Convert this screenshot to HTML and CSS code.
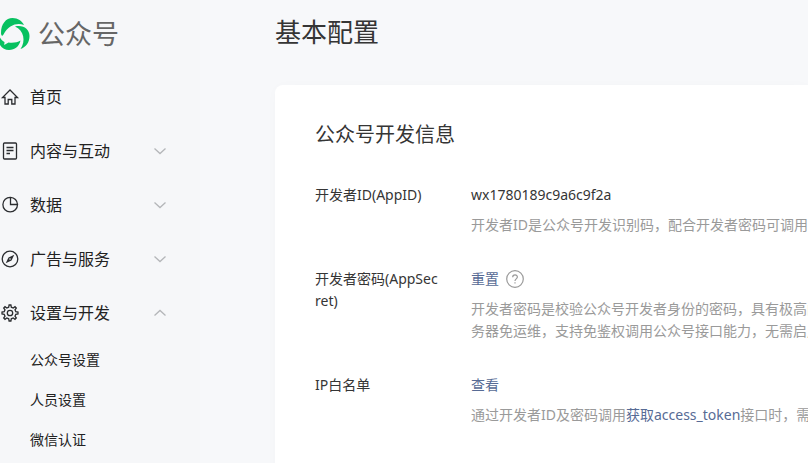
FILE: index.html
```html
<!DOCTYPE html>
<html lang="zh-CN">
<head>
<meta charset="utf-8">
<title>基本配置</title>
<link rel="stylesheet" href="styles.css">
</head>
<body>
<div class="layout">
  <aside class="sidebar">
    <a class="brand" href="#">
      <svg class="brand-logo" viewBox="0 0 30 34" aria-hidden="true">
        <path d="M1 16C1 7 6 1 12.500 1C18 1 22 4 24 8C17 5.500 8.500 8 3.500 17.500C2 20 1 18 1 16Z"/>
        <path d="M15 9.500C23 7.500 29.500 12 29.500 19C29.500 25.500 26 30 20.500 32C26 24.500 24 13 15 9.500Z"/>
        <path d="M-3 15L-.5 19.500C.5 22 2.500 24 4.500 25L4.200 28L8.500 25.500C13 26 17.500 25.500 20.500 23.500C19 29.500 15 33 9 33C2 33-3 27-3 15Z"/>
      </svg>
      <span class="brand-name">公众号</span>
    </a>
    <nav>
      <a class="menu-item" href="#">
        <svg class="menu-icon" viewBox="0 0 20 20" aria-hidden="true"><path d="M10 3L2.500 10.500H5V17H8.200V12.500H11.800V17H15V10.500H17.500Z"/></svg>
        <span>首页</span>
      </a>
      <button class="menu-item" type="button">
        <svg class="menu-icon" viewBox="0 0 20 20" aria-hidden="true"><rect x="3.500" y="2" width="13" height="16" rx="1"/><path d="M6.500 6.500H13.500M6.500 9.500H13.500M6.500 12.500H10"/></svg>
        <span>内容与互动</span>
        <svg class="chevron" viewBox="0 0 12 6" aria-hidden="true"><path d="M.5.500L6 5.500L11.500.5"/></svg>
      </button>
      <button class="menu-item" type="button">
        <svg class="menu-icon" viewBox="0 0 20 20" aria-hidden="true"><path d="M10.500 2.300A7.300 7.300 0 1 0 17.500 9.500H10.500V2"/><path d="M10.500 2.300A7.300 7.300 0 0 1 17.500 9.500"/></svg>
        <span>数据</span>
        <svg class="chevron" viewBox="0 0 12 6" aria-hidden="true"><path d="M.5.500L6 5.500L11.500.5"/></svg>
      </button>
      <button class="menu-item" type="button">
        <svg class="menu-icon" viewBox="0 0 20 20" aria-hidden="true"><circle cx="10" cy="10" r="7.800"/><path class="solid" d="M14.300 5.700L11.500 11.500L5.700 14.300L8.500 8.500Z"/><circle class="dot" cx="10" cy="10" r=".8"/></svg>
        <span>广告与服务</span>
        <svg class="chevron" viewBox="0 0 12 6" aria-hidden="true"><path d="M.5.500L6 5.500L11.500.5"/></svg>
      </button>
      <button class="menu-item" type="button" aria-expanded="true">
        <svg class="menu-icon" viewBox="0 0 20 20" aria-hidden="true"><path d="M8.700 4.200L9.100 2H10.900L11.300 4.200L13.200 5L15 3.700L16.300 5L15 6.800L15.800 8.700L18 9.100V10.900L15.800 11.300L15 13.200L16.300 15L15 16.300L13.200 15L11.300 15.800L10.900 18H9.100L8.700 15.800L6.800 15L5 16.300L3.700 15L5 13.200L4.200 11.300L2 10.900V9.100L4.200 8.700L5 6.800L3.700 5L5 3.700L6.800 5Z"/><circle cx="10" cy="10" r="2.700"/></svg>
        <span>设置与开发</span>
        <svg class="chevron" viewBox="0 0 12 6" aria-hidden="true"><path d="M.5 5.500L6 .5L11.500 5.500"/></svg>
      </button>
      <div class="submenu">
        <a href="#">公众号设置</a>
        <a href="#">人员设置</a>
        <a href="#">微信认证</a>
      </div>
    </nav>
  </aside>
  <main class="main">
    <h1>基本配置</h1>
    <section class="card">
      <h2>公众号开发信息</h2>
      <dl class="info">
        <dt>开发者ID(AppID)</dt>
        <dd>
          <div>wx1780189c9a6c9f2a</div>
          <p>开发者ID是公众号开发识别码，配合开发者密码可调用</p>
        </dd>
        <dt>开发者密码(AppSecret)</dt>
        <dd>
          <div class="actions">
            <a href="#">重置</a>
            <svg class="help" viewBox="0 0 18 18" aria-hidden="true"><circle cx="9" cy="9" r="8.300"/><path d="M6.700 7.200C6.700 4.200 11.400 4.200 11.400 7.100C11.400 8.800 9 9 9 11"/><path d="M9 12.300V13.500"/></svg>
          </div>
          <p>开发者密码是校验公众号开发者身份的密码，具有极高的<br>务器免运维，支持免鉴权调用公众号接口能力，无需启用</p>
        </dd>
        <dt>IP白名单</dt>
        <dd>
          <div><a href="#">查看</a></div>
          <p>通过开发者ID及密码调用<a href="#">获取access_token</a>接口时，需</p>
        </dd>
      </dl>
    </section>
  </main>
</div>
</body>
</html>
```
FILE: styles.css
```css
* {
  box-sizing: border-box;
}

body {
  margin: 0;
  background: #f7f8fa;
  color: #353535;
  font: 14px/22px "Noto Sans", "Noto Sans CJK SC", sans-serif;
}

a {
  color: #576b95;
  text-decoration: none;
}

.layout {
  display: flex;
  height: 100vh;
  overflow: hidden;
}

.sidebar {
  flex: 0 0 200px;
  background: #f6f7f9;
}

.brand {
  display: flex;
  align-items: center;
  gap: 8px;
  height: 68px;
  margin-bottom: 2px;
}

.brand-logo {
  width: 30px;
  height: 34px;
  fill: #07c160;
}

.brand-name {
  color: #666;
  font-size: 27px;
  line-height: 36px;
}

.menu-item {
  display: flex;
  align-items: center;
  gap: 10px;
  width: 100%;
  height: 54px;
  padding: 0 34px 0 0;
  border: 0;
  background: none;
  color: #222;
  font: inherit;
  font-size: 16px;
  text-align: left;
}

.menu-icon {
  width: 20px;
  height: 20px;
  fill: none;
  stroke: #2b2d30;
  stroke-width: 1.3;
}

.menu-icon .solid {
  fill: #2b2d30;
  stroke: none;
}

.menu-icon .dot {
  fill: #f6f7f9;
  stroke: none;
}

.chevron {
  width: 12px;
  height: 6px;
  margin-left: auto;
  overflow: visible;
  fill: none;
  stroke: #b4b6b9;
  stroke-width: 1.3;
}

.submenu a {
  display: block;
  padding-left: 30px;
  color: #222;
  line-height: 40px;
}

.main {
  flex: 1;
  min-width: 0;
  padding: 12px 0 0 75px;
}

h1,
h2 {
  margin: 0;
  font-weight: 400;
}

h1 {
  margin-bottom: 33px;
  font-size: 26px;
  line-height: 40px;
}

.card {
  min-height: 100%;
  padding: 36px 0 40px 40px;
  border-radius: 8px 0 0 8px;
  background: #fff;
  box-shadow: 0 1px 12px rgba(0, 0, 0, 0.02);
  overflow: hidden;
}

h2 {
  margin-bottom: 35px;
  font-size: 20px;
  line-height: 28px;
}

.info {
  display: grid;
  grid-template-columns: 126px 1fr;
  gap: 32px 30px;
  margin: 0;
}

.info dt {
  word-break: break-all;
}

.info dd {
  min-width: 0;
  margin: 0;
}

.info p {
  margin: 8px 0 0;
  color: #9a9a9a;
  white-space: nowrap;
}

.actions {
  display: flex;
  align-items: center;
  gap: 7px;
}

.help {
  width: 18px;
  height: 18px;
  fill: none;
  stroke: #9a9a9a;
  stroke-width: 1.2;
}
```
